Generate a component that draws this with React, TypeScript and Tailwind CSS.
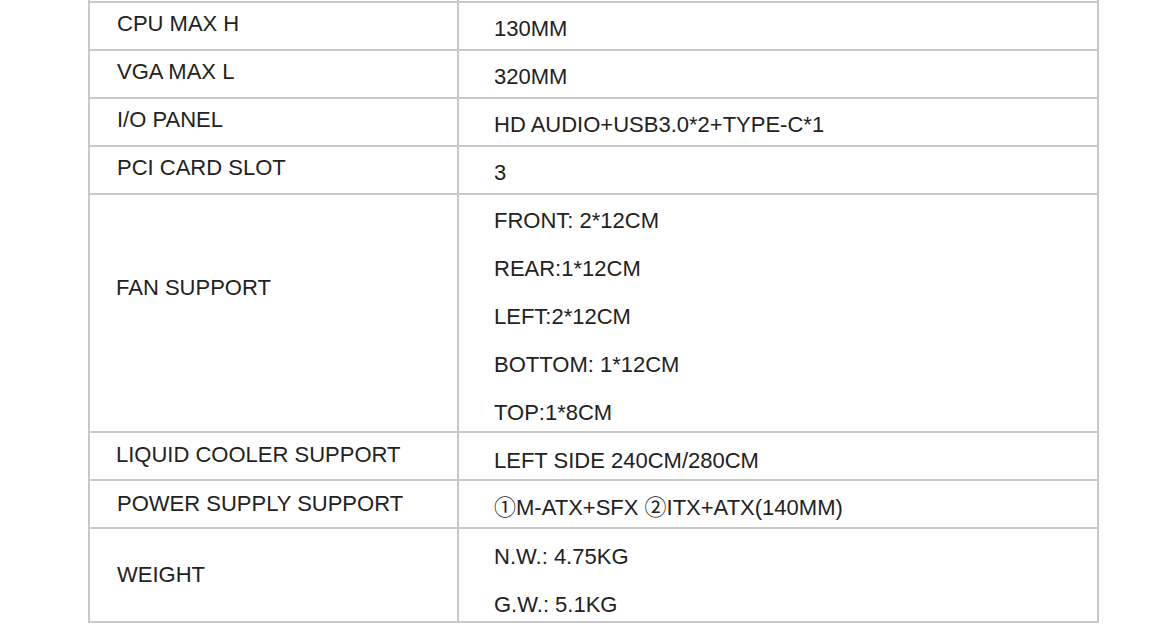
const rows: {
  label: string
  value: string[]
  h: string
  labelPad: string
  valuePad: string
}[] = [
  { label: 'CPU MAX H', value: ['130MM'], h: 'h-[46px]', labelPad: 'pb-[4px] pl-[27px]', valuePad: 'pt-[5px]' },
  { label: 'VGA MAX L', value: ['320MM'], h: 'h-[46px]', labelPad: 'pb-[4px] pl-[27px]', valuePad: 'pt-[5px]' },
  { label: 'I/O PANEL', value: ['HD AUDIO+USB3.0*2+TYPE-C*1'], h: 'h-[46px]', labelPad: 'pb-[4px] pl-[27px]', valuePad: 'pt-[5px]' },
  { label: 'PCI CARD SLOT', value: ['3'], h: 'h-[46px]', labelPad: 'pb-[4px] pl-[27px]', valuePad: 'pt-[5px]' },
  {
    label: 'FAN SUPPORT',
    value: ['FRONT: 2*12CM', 'REAR:1*12CM', 'LEFT:2*12CM', 'BOTTOM: 1*12CM', 'TOP:1*8CM'],
    h: 'h-[236px]',
    labelPad: 'pb-[50px] pl-[26px]',
    valuePad: 'pt-[14px]',
  },
  { label: 'LIQUID COOLER SUPPORT', value: ['LEFT SIDE 240CM/280CM'], h: 'h-[46px]', labelPad: 'pb-[2px] pl-[26px]', valuePad: 'pt-[10px]' },
  { label: 'POWER SUPPLY SUPPORT', value: ['①M-ATX+SFX ②ITX+ATX(140MM)'], h: 'h-[46px]', labelPad: 'pl-[27px]', valuePad: 'pt-[8px]' },
  { label: 'WEIGHT', value: ['N.W.: 4.75KG', 'G.W.: 5.1KG'], h: 'h-[92px]', labelPad: 'pl-[27px]', valuePad: 'pt-[16px]' },
]

export default function App() {
  return (
    <div className="h-[625px] w-[1173px] overflow-hidden bg-white font-['Liberation_Sans','Noto_Sans_CJK_SC',sans-serif] text-[22px] leading-[24px] text-[#222]">
      <div className="ml-[88px] w-[1011px] border-x-2 border-[#c8c8c8]">
        <div className="flex h-px">
          <div className="w-[369px] border-r-2 border-[#c8c8c8]" />
        </div>
        {rows.map((r, i) => (
          <div
            key={r.label}
            className={`flex border-t-2 border-[#c8c8c8] ${i === rows.length - 1 ? 'border-b-2' : ''}`}
          >
            <div className={`flex w-[369px] items-center border-r-2 border-[#c8c8c8] ${r.h} ${r.labelPad}`}>
              {r.label}
            </div>
            <div className={`flex flex-1 flex-col gap-[24px] pl-[35px] ${r.h} ${r.value.length > 1 ? r.valuePad : 'justify-center ' + r.valuePad}`}>
              {r.value.map((v) => (
                <div key={v} className="whitespace-nowrap">
                  {v}
                </div>
              ))}
            </div>
          </div>
        ))}
      </div>
    </div>
  )
}
